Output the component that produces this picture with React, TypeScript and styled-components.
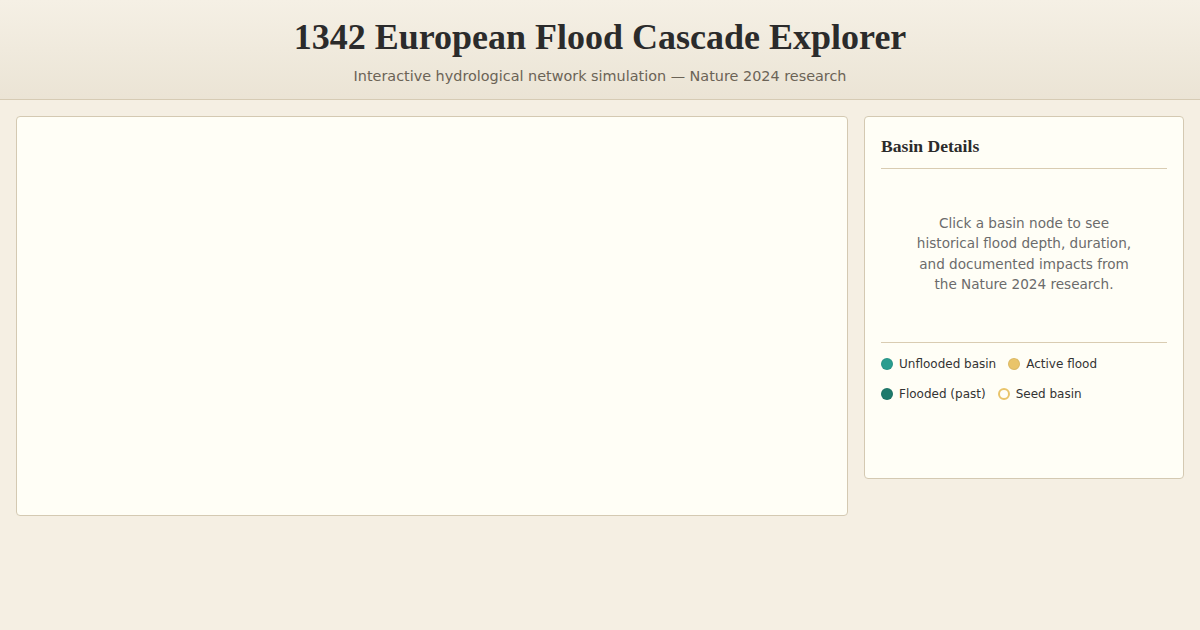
import React from "react";
import styled, { createGlobalStyle } from "styled-components";

const GlobalStyle = createGlobalStyle`
  html, body { margin: 0; padding: 0; }
  body {
    background: #f5efe3;
    font-family: "DejaVu Sans", sans-serif;
    color: #2b2b2b;
  }
`;

const Header = styled.header`
  background: linear-gradient(180deg, #f5f0e5 0%, #ebe4d5 100%);
  border-bottom: 1px solid #d6cbb4;
  padding: 17px 16px 14px;
  text-align: center;
`;

const Title = styled.h1`
  margin: 0;
  font-family: "Liberation Serif", serif;
  font-weight: 700;
  font-size: 36px;
  line-height: 41px;
  color: #2b2b2b;
`;

const Subtitle = styled.p`
  margin: 9px 0 0;
  font-size: 14.4px;
  line-height: 18px;
  color: #6b6356;
`;

const Main = styled.main`
  display: flex;
  gap: 16px;
  padding: 16px;
  align-items: flex-start;
`;

const CanvasPanel = styled.section`
  flex: 1;
  height: 398px;
  background: #fffef6;
  border: 1px solid #d4c9b2;
  border-radius: 4px;
`;

const Sidebar = styled.aside`
  width: 286px;
  min-height: 329px;
  padding: 16px;
  background: #fffef6;
  border: 1px solid #d4c9b2;
  border-radius: 4px;
`;

const SideTitle = styled.h3`
  margin: 0;
  padding: 0 0 9px;
  border-bottom: 1px solid #d9ccb2;
  font-family: "Liberation Serif", serif;
  font-weight: 700;
  font-size: 17.6px;
  line-height: 26px;
  color: #2b2b2b;
`;

const Empty = styled.p`
  margin: 0;
  padding: 44px 30px 47px;
  text-align: center;
  font-size: 13.6px;
  line-height: 20.4px;
  color: #6b6b6b;
`;

const Legend = styled.div`
  border-top: 1px solid #d9ccb2;
  padding-top: 12px;
  display: flex;
  flex-direction: column;
  gap: 12px;
`;

const LegendRow = styled.div`
  display: flex;
  gap: 12px;
`;

const LegendItem = styled.div`
  display: flex;
  align-items: center;
  gap: 6px;
  font-size: 12px;
  line-height: 18px;
  color: #333;
`;

const Dot = styled.span<{ $color: string; $hollow?: boolean }>`
  width: 12px;
  height: 12px;
  box-sizing: border-box;
  border-radius: 50%;
  background: ${(p) => (p.$hollow ? "#fffef6" : p.$color)};
  border: ${(p) => (p.$hollow ? `2px solid ${p.$color}` : "1px solid rgba(0,0,0,0.06)")};
  flex: none;
`;

export default function App() {
  return (
    <>
      <GlobalStyle />
      <Header>
        <Title>1342 European Flood Cascade Explorer</Title>
        <Subtitle>Interactive hydrological network simulation — Nature 2024 research</Subtitle>
      </Header>
      <Main>
        <CanvasPanel />
        <Sidebar>
          <SideTitle>Basin Details</SideTitle>
          <Empty>
            Click a basin node to see historical flood depth, duration, and documented impacts from the Nature 2024 research.
          </Empty>
          <Legend>
            <LegendRow>
              <LegendItem>
                <Dot $color="#2a9d8f" />
                Unflooded basin
              </LegendItem>
              <LegendItem>
                <Dot $color="#e9c46a" />
                Active flood
              </LegendItem>
            </LegendRow>
            <LegendRow>
              <LegendItem>
                <Dot $color="#1f7a6c" />
                Flooded (past)
              </LegendItem>
              <LegendItem>
                <Dot $color="#e9c46a" $hollow />
                Seed basin
              </LegendItem>
            </LegendRow>
          </Legend>
        </Sidebar>
      </Main>
    </>
  );
}
